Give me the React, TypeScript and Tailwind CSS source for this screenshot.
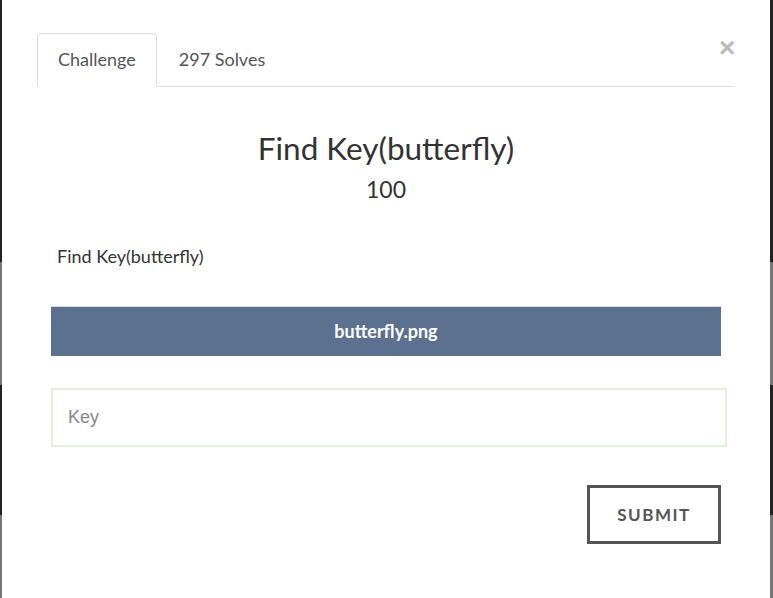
import React from 'react';

const Edge: React.FC<{ w: string }> = ({ w }) => (
  <div className={`flex flex-col ${w} shrink-0`}>
    <div className="h-[262px] bg-[#222]" />
    <div className="h-[123px] bg-[#777]" />
    <div className="h-[130px] bg-[#222]" />
    <div className="flex-1 bg-[#777]" />
  </div>
);

export default function App() {
  return (
    <div className="flex h-[598px] w-[773px] bg-white" style={{ fontFamily: 'Lato, "Open Sans", sans-serif' }}>
      <Edge w="w-[2px]" />
      <div className="flex-1 flex flex-col">
        {/* tabs */}
        <div className="flex items-start pt-[33px] pl-[35px] pr-[36px]">
          <div className="flex flex-1 border-b border-[#ddd]">
            <div className="h-[54px] -mb-px px-[20px] pb-[2px] flex items-center border border-[#ddd] border-b-white rounded-t-[4px] bg-white text-[18px] text-[#555]">
              Challenge
            </div>
            <div className="h-[53px] px-[22px] flex items-center text-[18px] text-[#555]">297 Solves</div>
          </div>
          <div className="w-0 relative">
            <span className="absolute -left-[15px] top-[1px] text-[28px] leading-none text-[#bbb] font-bold" style={{ fontFamily: '"Liberation Sans", Arial, sans-serif' }}>×</span>
          </div>
        </div>

        <h1 className="mt-[43px] text-center text-[31.5px] leading-[36px] text-[#333]">Find Key(butterfly)</h1>
        <div className="mt-[9px] text-center text-[23px] leading-[28px] text-[#333]">100</div>

        <p className="mt-[41px] pl-[55px] text-[18px] leading-[24px] text-[#333]">Find Key(butterfly)</p>

        <div className="mt-[38px] ml-[49px] w-[670px] h-[50px] bg-[#5b718f] border-t border-[#ddd] flex items-center justify-center text-white font-bold text-[18px]">
          butterfly.png
        </div>

        <input
          placeholder="Key"
          className="mt-[32px] ml-[49px] w-[676px] h-[59px] border-2 border-[#e1f0d8] px-[15px] text-[18px] text-[#555] placeholder-[#888] outline-none"
          style={{ fontFamily: '"Liberation Sans", Arial, sans-serif' }}
        />

        <div className="flex justify-end pr-[49px] mt-[38px]">
          <button className="w-[134px] h-[59px] border-[3px] border-[#555] text-[#555] font-bold text-[17px] tracking-[1.5px] uppercase">
            Submit
          </button>
        </div>
      </div>
      <Edge w="w-[3px]" />
    </div>
  );
}
